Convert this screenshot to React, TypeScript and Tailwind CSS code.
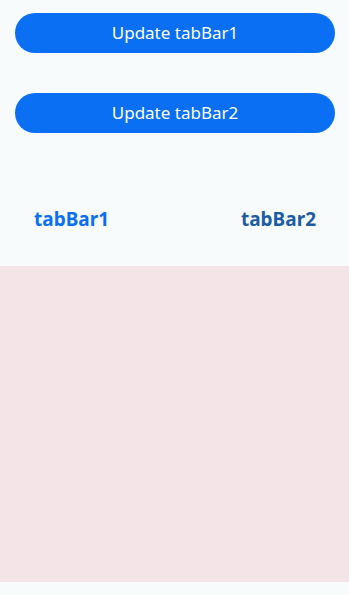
export default function App() {
  return (
    <div
      className="min-h-[595px] w-full bg-[#f7fbfb] flex flex-col"
      style={{ fontFamily: '"Noto Sans", Roboto, sans-serif' }}
    >
      {/* buttons */}
      <div className="flex flex-col gap-10 pl-[15px] pr-[14px] pt-[13px]">
        <button className="h-10 w-full rounded-full bg-[#0a6ff2] text-white text-[17px]">
          Update tabBar1
        </button>
        <button className="h-10 w-full rounded-full bg-[#0a6ff2] text-white text-[17px]">
          Update tabBar2
        </button>
      </div>

      {/* tabs */}
      <div className="mt-10 flex flex-col">
        <div className="h-[93px] flex items-center justify-between pl-[34px] pr-[33px]">
          <span className="text-[19px] font-bold text-[#0a6ff2]">tabBar1</span>
          <span className="text-[19px] font-bold text-[#1d5ba3]">tabBar2</span>
        </div>
        <div className="h-[316px] bg-[#f5e4e7]" />
      </div>
    </div>
  );
}
